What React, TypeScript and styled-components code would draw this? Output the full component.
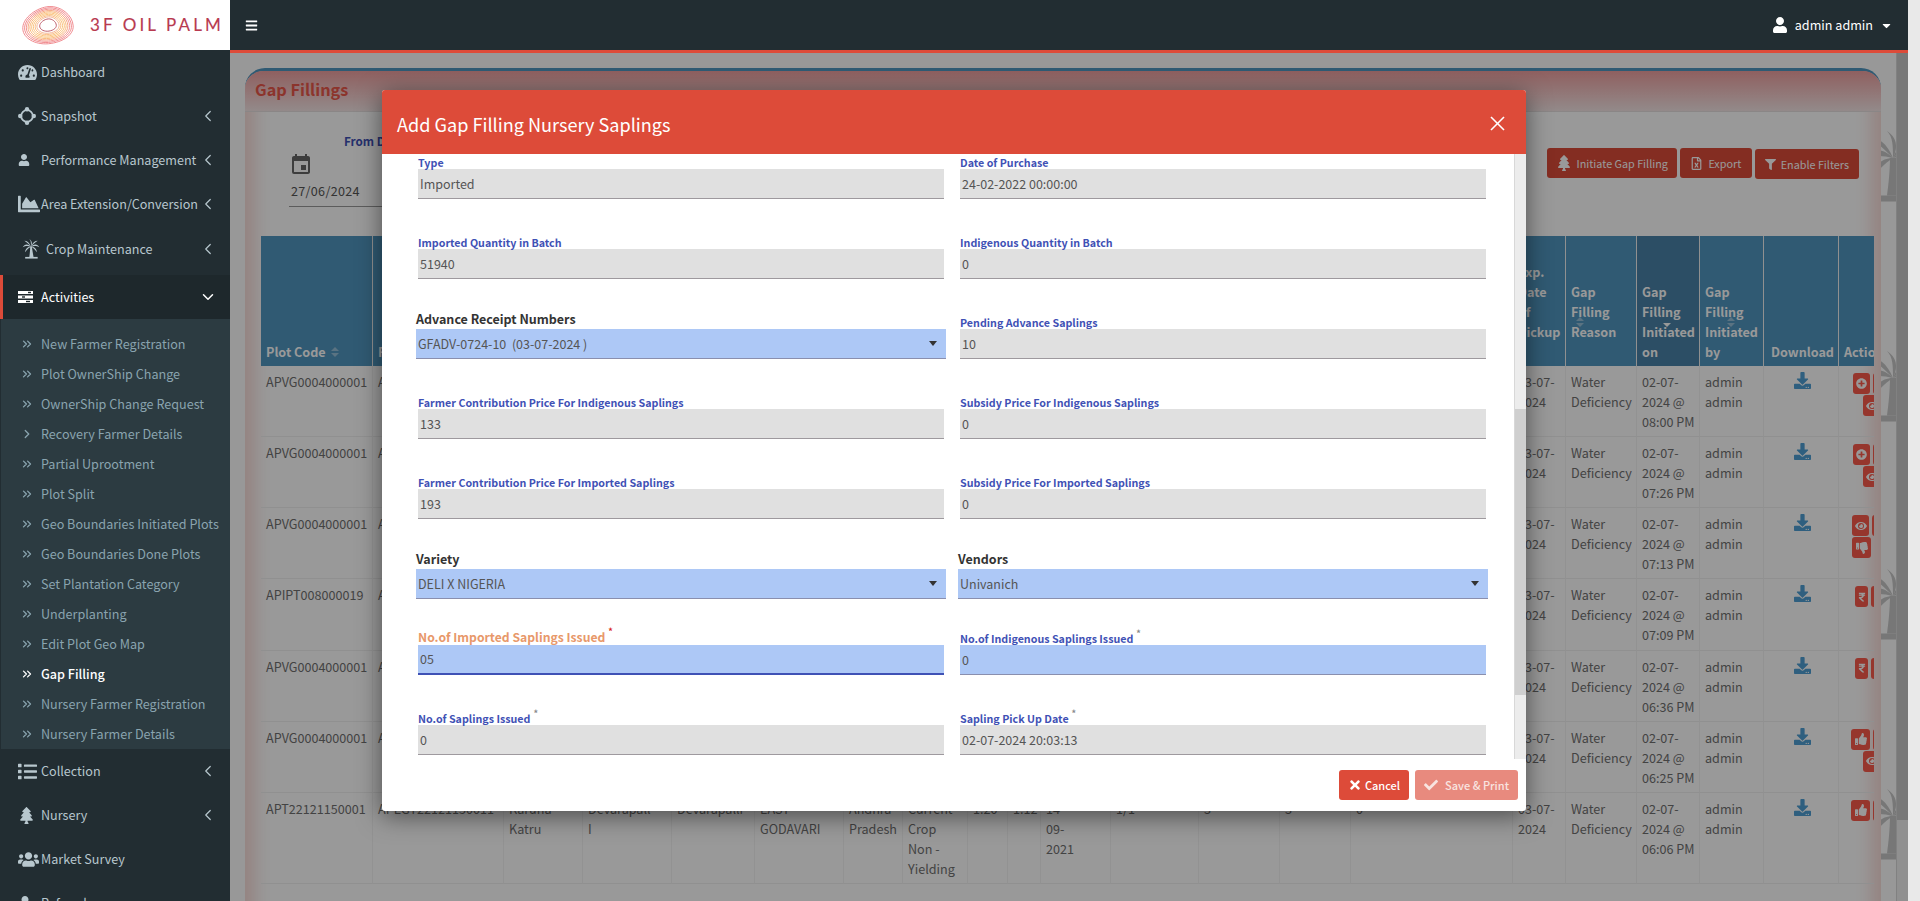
import React from "react";
import styled, { createGlobalStyle } from "styled-components";
import {
  FaBars,
  FaCaretDown,
  FaChartArea,
  FaCheck,
  FaDownload,
  FaEye,
  FaFilter,
  FaList,
  FaPlusCircle,
  FaRegFileExcel,
  FaRupeeSign,
  FaTachometerAlt,
  FaThumbsDown,
  FaThumbsUp,
  FaTimes,
  FaTree,
  FaUser,
  FaUsers,
} from "react-icons/fa";
import { ChevronDown, ChevronLeft, ChevronRight, ChevronsRight } from "lucide-react";
import { MdEvent } from "react-icons/md";

const font = `"Noto Sans CJK SC", "Noto Sans", sans-serif`;

const GlobalStyle = createGlobalStyle`
  html, body {
    margin: 0;
    height: 901px;
    overflow: hidden;
    background: #e9e9e9;
    font-family: ${font};
  }
  * { box-sizing: border-box; }
`;

const SnapshotIcon = () => (
  <svg width="18" height="18" viewBox="0 0 18 18" fill="currentColor">
    <circle cx="9" cy="9" r="5.8" fill="none" stroke="currentColor" strokeWidth="1.8" />
    <circle cx="9" cy="2.2" r="2.2" />
    <circle cx="9" cy="15.8" r="2.2" />
    <circle cx="2.2" cy="9" r="2.2" />
    <circle cx="15.8" cy="9" r="2.2" />
  </svg>
);

const TasksIcon = () => (
  <svg width="15" height="12" viewBox="0 0 15 12">
    <rect x="0" y="0" width="15" height="3" fill="#fff" />
    <rect x="0" y="4.5" width="15" height="3" fill="#fff" />
    <rect x="0" y="9" width="15" height="3" fill="#fff" />
    <rect x="10" y="0.8" width="3" height="1.4" fill="#1e282c" />
    <rect x="4" y="5.3" width="3" height="1.4" fill="#1e282c" />
    <rect x="8" y="9.8" width="4" height="1.4" fill="#1e282c" />
  </svg>
);

const PalmIcon = ({ size }: { size: number }) => (
  <svg width={size} height={size} viewBox="0 0 24 24" fill="currentColor">
    <path d="M12 9 C8 5 4 6 2 10 C5 8 8 8 12 9Z" />
    <path d="M12 9 C16 5 20 6 22 10 C19 8 16 8 12 9Z" />
    <path d="M12 9 C10 4 7 2 4 2 C7 4 9 6 12 9Z" />
    <path d="M12 9 C14 4 17 2 20 2 C17 4 15 6 12 9Z" />
    <path d="M12 9 C12 5 12 2 10 0 C13 2 14 5 12 9Z" />
    <path d="M12 9 C8 9 5 12 5 16 C7 13 9 11 12 9Z" />
    <path d="M12 9 C16 9 19 12 19 16 C17 13 15 11 12 9Z" />
    <path d="M11 9 L13 9 C13.5 13 14.5 18 15 21.5 L10 21.5 C10.5 18 11 13 11 9Z" />
    <rect x="5" y="21.5" width="15" height="2" />
  </svg>
);

const blob = "M52 6 C72 4 94 26 95 52 C96 76 72 94 46 95 C22 95 4 78 5 56 C6 32 30 8 52 6Z";
const rings: [number, string][] = [
  [1, "#ee7f85"],
  [0.93, "#ee8085"],
  [0.86, "#f08a86"],
  [0.79, "#f5a07a"],
  [0.72, "#f8b26e"],
  [0.65, "#f9bc70"],
  [0.58, "#f9bc70"],
  [0.51, "#f8b878"],
  [0.44, "#f4b08c"],
  [0.33, "#b8505f"],
];

const LogoMark = () => (
  <svg width="56" height="42" viewBox="0 0 100 100" preserveAspectRatio="none">
    {rings.map(([s, c]) => (
      <path
        key={s}
        d={blob}
        fill="none"
        stroke={c}
        strokeWidth="0.9"
        vectorEffect="non-scaling-stroke"
        transform={`translate(50 50) scale(${s}) translate(-50 -50)`}
      />
    ))}
  </svg>
);

const mainTop = [
  { label: "Dashboard", icon: <FaTachometerAlt size={19} /> },
  { label: "Snapshot", icon: <SnapshotIcon />, more: true },
  { label: "Performance Management", icon: <FaUser size={12} />, more: true },
  { label: "Area Extension/Conversion", icon: <FaChartArea size={22} />, more: true },
];

const subItems = [
  "New Farmer Registration",
  "Plot OwnerShip Change",
  "OwnerShip Change Request",
  "Recovery Farmer Details",
  "Partial Uprootment",
  "Plot Split",
  "Geo Boundaries Initiated Plots",
  "Geo Boundaries Done Plots",
  "Set Plantation Category",
  "Underplanting",
  "Edit Plot Geo Map",
  "Gap Filling",
  "Nursery Farmer Registration",
  "Nursery Farmer Details",
];

const mainBottom = [
  { label: "Collection", icon: <FaList size={19} />, more: true },
  { label: "Nursery", icon: <FaTree size={17} />, more: true },
  { label: "Market Survey", icon: <FaUsers size={21} /> },
  { label: "Referrals", icon: <FaUser size={14} /> },
];

const colWidths = [112, 131, 79, 89, 83, 89, 59, 65, 40, 33, 70, 88, 81, 71, 162, 53, 71, 63, 64, 75, 100];

type ActionKey = "plus" | "eye" | "down" | "up" | "rupee";

const rows: {
  plot: string;
  time: string;
  top: ActionKey;
  topIndent: number;
  second?: ActionKey;
  secondIndent?: number;
}[] = [
  { plot: "APVG0004000001", time: "08:00\u00a0PM", top: "plus", topIndent: 14, second: "eye", secondIndent: 24 },
  { plot: "APVG0004000001", time: "07:26\u00a0PM", top: "plus", topIndent: 14, second: "eye", secondIndent: 24 },
  { plot: "APVG0004000001", time: "07:13\u00a0PM", top: "eye", topIndent: 13, second: "down", secondIndent: 13 },
  { plot: "APIPT008000019", time: "07:09\u00a0PM", top: "rupee", topIndent: 16 },
  { plot: "APVG0004000001", time: "06:36\u00a0PM", top: "rupee", topIndent: 16 },
  { plot: "APVG0004000001", time: "06:25\u00a0PM", top: "up", topIndent: 12, second: "eye", secondIndent: 24 },
  { plot: "APT22121150001", time: "06:06\u00a0PM", top: "up", topIndent: 12 },
];

const actionIcon = (k: ActionKey) => {
  if (k === "plus") return <FaPlusCircle size={11} />;
  if (k === "eye") return <FaEye size={12} />;
  if (k === "down") return <FaThumbsDown size={12} />;
  if (k === "up") return <FaThumbsUp size={12} />;
  return <FaRupeeSign size={10} />;
};

const actionWidth = (k: ActionKey) => (k === "rupee" ? 13 : k === "plus" || k === "eye" ? 17 : 19);

const lastRowMiddle: React.ReactNode[] = [
  "Karuna Katru",
  <>
    Devarapall
    <br />I
  </>,
  "Devarapalli",
  "EAST GODAVARI",
  "Andhra Pradesh",
  <>
    Current
    <br />
    Crop
    <br />
    Non -
    <br />
    Yielding
  </>,
  "1.20",
  "1.12",
  <>
    14-
    <br />
    09-
    <br />
    2021
  </>,
  "1/1",
  "3",
  "3",
  "0",
];

const palmTops = [78, 298, 516, 736, 856];

const ActionButtons = ({ row }: { row: (typeof rows)[number] }) => (
  <>
    <ActionRow $indent={row.topIndent}>
      <ActionBtn $w={actionWidth(row.top)}>{actionIcon(row.top)}</ActionBtn>
      <ActionBtn $w={17} />
    </ActionRow>
    {row.second && (
      <ActionRow $indent={row.secondIndent || 0}>
        <ActionBtn $w={actionWidth(row.second)}>{actionIcon(row.second)}</ActionBtn>
        <ActionBtn $w={17} />
      </ActionRow>
    )}
  </>
);

const App = () => {
  return (
    <>
      <GlobalStyle />
      <Page>
        <Sidebar>
          <Logo>
            <LogoMark />
            <LogoText>3F OIL PALM</LogoText>
          </Logo>
          {mainTop.map((m) => (
            <NavItem key={m.label}>
              <NavIcon>{m.icon}</NavIcon>
              <span>{m.label}</span>
              {m.more && <Arrow><ChevronLeft size={18} strokeWidth={1.6} /></Arrow>}
            </NavItem>
          ))}
          <NavItem $tall>
            <NavIcon $crop><PalmIcon size={20} /></NavIcon>
            <span>Crop Maintenance</span>
            <Arrow><ChevronLeft size={18} strokeWidth={1.6} /></Arrow>
          </NavItem>
          <NavItem $active>
            <NavIcon><TasksIcon /></NavIcon>
            <span>Activities</span>
            <Arrow><ChevronDown size={18} strokeWidth={2} /></Arrow>
          </NavItem>
          <SubMenu>
            {subItems.map((s) => (
              <SubItem key={s} $current={s === "Gap Filling"}>
                <SubIcon>
                  {s === "Recovery Farmer Details" ? (
                    <ChevronRight size={14} strokeWidth={2.2} />
                  ) : (
                    <ChevronsRight size={14} strokeWidth={2.2} />
                  )}
                </SubIcon>
                {s}
              </SubItem>
            ))}
          </SubMenu>
          {mainBottom.map((m) => (
            <NavItem key={m.label}>
              <NavIcon>{m.icon}</NavIcon>
              <span>{m.label}</span>
              {m.more && <Arrow><ChevronLeft size={18} strokeWidth={1.6} /></Arrow>}
            </NavItem>
          ))}
        </Sidebar>

        <Main>
          <Topbar>
            <FaBars size={13} color="#fff" />
            <UserMenu>
              <FaUser size={16} />
              <span>admin admin</span>
              <FaCaretDown size={13} />
            </UserMenu>
          </Topbar>

          <Content>
            {palmTops.map((t) => (
              <Palm key={t} style={{ top: t }}>
                <PalmIcon size={72} />
              </Palm>
            ))}
            <Box>
              <BoxHeader>Gap Fillings</BoxHeader>
              <FilterRow>
                <DateField>
                  <FromLabel>From Date</FromLabel>
                  <MdEvent size={24} color="#666" />
                  <DateValue>27/06/2024</DateValue>
                </DateField>
                <Toolbar>
                  <ToolButton $pad={9}>
                    <FaTree size={16} /> Initiate Gap Filling
                  </ToolButton>
                  <ToolButton $pad={10.5}>
                    <FaRegFileExcel size={13} /> Export
                  </ToolButton>
                  <ToolButton $pad={10} $low>
                    <FaFilter size={11} /> Enable Filters
                  </ToolButton>
                </Toolbar>
              </FilterRow>
              <TableWrap>
                <Table>
                  <colgroup>
                    {colWidths.map((w, i) => (
                      <col key={i} width={w} />
                    ))}
                  </colgroup>
                  <thead>
                    <tr>
                      <Th>
                        Plot Code <SortMark $left={70} $bottom={9} />
                      </Th>
                      <Th>Farmer Code</Th>
                      {Array.from({ length: 13 }).map((_, i) => (
                        <Th key={i} />
                      ))}
                      <Th $raised>
                        Exp.
                        <br />
                        Date
                        <br />
                        of
                        <br />
                        Pickup
                      </Th>
                      <Th $raised>
                        Gap Filling Reason <SortMark $left={10} $bottom={39} />
                      </Th>
                      <Th $sorted>
                        Gap Filling Initiated on <SortMark $left={26} $bottom={39} $down />
                      </Th>
                      <Th>
                        Gap Filling Initiated by <SortMark $left={27} $bottom={39} />
                      </Th>
                      <Th $center>Download</Th>
                      <Th>Action</Th>
                    </tr>
                  </thead>
                  <tbody>
                    {rows.map((r, i) => (
                      <tr key={i}>
                        <Td>{r.plot}</Td>
                        <Td>{i === 6 ? "APEGT22121150011" : r.plot}</Td>
                        {lastRowMiddle.map((c, j) => (
                          <Td key={j}>{i === 6 ? c : ""}</Td>
                        ))}
                        <Td>03-07-2024</Td>
                        <Td>Water Deficiency</Td>
                        <Td>02-07-2024 @ {r.time}</Td>
                        <Td>admin admin</Td>
                        <Td $center>
                          <FaDownload size={17} color="#4f9fd4" />
                        </Td>
                        <Td $flush>
                          <ActionButtons row={r} />
                        </Td>
                      </tr>
                    ))}
                  </tbody>
                </Table>
              </TableWrap>
            </Box>
            <InnerScroll />
            <Backdrop />
          </Content>
        </Main>

        <PageScroll />

        <Modal>
          <ModalHeader>
            <span>Add Gap Filling Nursery Saplings</span>
            <svg width="15" height="15" viewBox="0 0 15 15" stroke="#fff" strokeWidth="1.6">
              <line x1="1" y1="1" x2="14" y2="14" />
              <line x1="14" y1="1" x2="1" y2="14" />
            </svg>
          </ModalHeader>
          <ModalBody>
            <Form>
              <FormRow>
                <Field>
                  <FieldLabel>Type</FieldLabel>
                  <Input>Imported</Input>
                </Field>
                <Field>
                  <FieldLabel>Date of Purchase</FieldLabel>
                  <Input>24-02-2022 00:00:00</Input>
                </Field>
              </FormRow>
              <FormRow>
                <Field>
                  <FieldLabel>Imported Quantity in Batch</FieldLabel>
                  <Input>51940</Input>
                </Field>
                <Field>
                  <FieldLabel>Indigenous Quantity in Batch</FieldLabel>
                  <Input>0</Input>
                </Field>
              </FormRow>
              <FormRow>
                <Field>
                  <SelectLabel>Advance Receipt Numbers</SelectLabel>
                  <Select>
                    GFADV-0724-10&nbsp; (03-07-2024 )
                    <Caret />
                  </Select>
                </Field>
                <Field>
                  <FieldLabel>Pending Advance Saplings</FieldLabel>
                  <Input>10</Input>
                </Field>
              </FormRow>
              <FormRow>
                <Field>
                  <FieldLabel>Farmer Contribution Price For Indigenous Saplings</FieldLabel>
                  <Input>133</Input>
                </Field>
                <Field>
                  <FieldLabel>Subsidy Price For Indigenous Saplings</FieldLabel>
                  <Input>0</Input>
                </Field>
              </FormRow>
              <FormRow>
                <Field>
                  <FieldLabel>Farmer Contribution Price For Imported Saplings</FieldLabel>
                  <Input>193</Input>
                </Field>
                <Field>
                  <FieldLabel>Subsidy Price For Imported Saplings</FieldLabel>
                  <Input>0</Input>
                </Field>
              </FormRow>
              <FormRow $tight>
                <Field>
                  <SelectLabel>Variety</SelectLabel>
                  <Select>
                    DELI X NIGERIA
                    <Caret />
                  </Select>
                </Field>
                <Field>
                  <SelectLabel>Vendors</SelectLabel>
                  <Select>
                    Univanich
                    <Caret />
                  </Select>
                </Field>
              </FormRow>
              <FormRow>
                <Field>
                  <FieldLabel $focused>
                    No.of Imported Saplings Issued<Req $focused>*</Req>
                  </FieldLabel>
                  <Input $filled $focused>05</Input>
                </Field>
                <Field>
                  <FieldLabel>
                    No.of Indigenous Saplings Issued<Req>*</Req>
                  </FieldLabel>
                  <Input $filled>0</Input>
                </Field>
              </FormRow>
              <FormRow>
                <Field>
                  <FieldLabel>
                    No.of Saplings Issued<Req>*</Req>
                  </FieldLabel>
                  <Input>0</Input>
                </Field>
                <Field>
                  <FieldLabel>
                    Sapling Pick Up Date<Req>*</Req>
                  </FieldLabel>
                  <Input>02-07-2024 20:03:13</Input>
                </Field>
              </FormRow>
            </Form>
            <ScrollTrack>
              <ScrollThumb />
            </ScrollTrack>
          </ModalBody>
          <ModalFooter>
            <FootButton>
              <FaTimes size={14} /> Cancel
            </FootButton>
            <FootButton $disabled>
              <FaCheck size={14} /> Save &amp; Print
            </FootButton>
          </ModalFooter>
        </Modal>
      </Page>
    </>
  );
};

const Page = styled.div`
  display: flex;
  width: 1920px;
  height: 901px;
  overflow: hidden;
  position: relative;
`;

const Sidebar = styled.div`
  width: 230px;
  flex-shrink: 0;
  height: 901px;
  overflow: hidden;
  background: #222d32;
`;

const Logo = styled.div`
  height: 50px;
  background: #fff;
  display: flex;
  align-items: center;
  padding-left: 20px;
  gap: 14px;
`;

const LogoText = styled.div`
  font-family: "Lato", sans-serif;
  font-size: 17px;
  font-weight: 400;
  letter-spacing: 3.1px;
  line-height: 20px;
  color: #b83a50;
  -webkit-text-stroke: 0.15px #b83a50;
  white-space: nowrap;
`;

const NavItem = styled.div<{ $active?: boolean; $tall?: boolean }>`
  height: ${(p) => (p.$tall ? 49 : 44)}px;
  display: flex;
  align-items: center;
  padding: ${(p) => (p.$tall ? "0 13px 4px 0" : "0 13px 0 0")};
  font-size: 12.6px;
  line-height: 20px;
  white-space: nowrap;
  color: ${(p) => (p.$active ? "#fff" : "#b8c7ce")};
  background: ${(p) => (p.$active ? "#1e282c" : "transparent")};
  border-left: 3px solid ${(p) => (p.$active ? "#dd4b39" : "transparent")};
`;

const NavIcon = styled.div<{ $crop?: boolean }>`
  width: ${(p) => (p.$crop ? 43 : 38)}px;
  padding-left: ${(p) => (p.$crop ? 18 : 15)}px;
  display: flex;
  align-items: center;
  flex-shrink: 0;
`;

const Arrow = styled.span`
  margin-left: auto;
  display: flex;
`;

const SubMenu = styled.div`
  background: #2c3b41;
  padding-top: 10px;
  border-left: 1px solid #222d32;
`;

const SubItem = styled.div<{ $current?: boolean }>`
  height: 30px;
  display: flex;
  align-items: center;
  font-size: 12.6px;
  line-height: 20px;
  white-space: nowrap;
  color: ${(p) => (p.$current ? "#fff" : "#8aa4af")};
  font-weight: ${(p) => (p.$current ? 500 : 400)};
`;

const SubIcon = styled.span`
  width: 40px;
  padding-left: 19px;
  display: flex;
  flex-shrink: 0;
`;

const Main = styled.div`
  width: 1678px;
  flex-shrink: 0;
  display: flex;
  flex-direction: column;
`;

const Topbar = styled.div`
  height: 53px;
  flex-shrink: 0;
  background: #222d32;
  border-bottom: 3px solid #dd4b39;
  display: flex;
  align-items: center;
  justify-content: space-between;
  padding: 0 15px 0 15px;
`;

const UserMenu = styled.div`
  display: flex;
  align-items: center;
  gap: 7px;
  color: #fff;
  font-size: 12.6px;
  line-height: 20px;
`;

const Content = styled.div`
  flex: 1;
  position: relative;
  overflow: hidden;
  background: #fdfdfd;
  padding: 15px 27px 0 15px;
`;

const Palm = styled.div`
  position: absolute;
  left: 1627px;
  color: #c6c6c6;
  display: flex;
`;

const InnerScroll = styled.div`
  position: absolute;
  top: 0;
  right: 0;
  width: 12px;
  height: 100%;
  background: linear-gradient(#c8c8c8 767px, #f1f1f1 767px);
  border-left: 1px solid #d8d8d8;
`;

const Backdrop = styled.div`
  position: absolute;
  inset: 0;
  background: rgba(0, 0, 0, 0.4);
`;

const Box = styled.div`
  position: relative;
  height: 900px;
  background: #fff;
  border-top: 3px solid #4f96c0;
  border-radius: 20px 20px 0 0;
  box-shadow: inset 16px 0 16px -6px rgba(221, 75, 57, 0.2), inset -16px 0 16px -6px rgba(221, 75, 57, 0.2);
`;

const BoxHeader = styled.div`
  height: 41px;
  padding: 0 0 4px 10px;
  display: flex;
  align-items: center;
  font-size: 16.3px;
  line-height: 24px;
  font-weight: 700;
  color: #e9584a;
  border-radius: 18px 18px 0 0;
  border-bottom: 1px solid #e6e0e0;
  background: linear-gradient(#efa0a0, #f5e6e6);
`;

const FilterRow = styled.div`
  height: 124px;
  display: flex;
  justify-content: space-between;
  padding: 20px 22px 0 44px;
`;

const DateField = styled.div`
  width: 240px;
  font-size: 12.6px;
  line-height: 20px;
  color: #6a6a6a;
`;

const FromLabel = styled.div`
  margin-left: 55px;
  height: 21px;
  font-size: 11.7px;
  line-height: 18px;
  font-weight: 700;
  color: #3f51b5;
`;

const DateValue = styled.div`
  margin-top: -1px;
  padding: 0 2px 5px;
  font-size: 12.6px;
  color: #555;
  letter-spacing: 0.3px;
  border-bottom: 1px solid #999;
`;

const Toolbar = styled.div`
  display: flex;
  gap: 3px;
  padding-top: 16px;
`;

const ToolButton = styled.div<{ $low?: boolean; $pad: number }>`
  height: 30px;
  margin-top: ${(p) => (p.$low ? 1 : 0)}px;
  padding: 0 ${(p) => p.$pad}px;
  display: flex;
  align-items: center;
  gap: 5px;
  background: #dd4b39;
  border-radius: 3px;
  color: #fff;
  font-size: 10.8px;
  line-height: 16px;
  white-space: nowrap;
`;

const TableWrap = styled.div`
  margin: 0 7px 0 16px;
  overflow: hidden;
`;

const Table = styled.table`
  table-layout: fixed;
  border-collapse: separate;
  border-spacing: 0;
  width: 1678px;
  font-size: 12.6px;
  line-height: 20px;
`;

const Th = styled.th<{ $sorted?: boolean; $center?: boolean; $raised?: boolean }>`
  position: relative;
  height: 130px;
  vertical-align: bottom;
  padding: 0 2px ${(p) => (p.$raised ? 24 : 4)}px 5px;
  text-align: ${(p) => (p.$center ? "center" : "left")};
  font-weight: 700;
  font-size: 12.6px;
  color: #fff;
  background: ${(p) => (p.$sorted ? "#4a83a8" : "#5096c0")};
  border-right: 1px solid #f0f0f0;
  overflow: hidden;
  &:last-child { border-right: none; }
`;

const SortMark = styled.span<{ $left: number; $bottom: number; $down?: boolean }>`
  position: absolute;
  left: ${(p) => p.$left}px;
  bottom: ${(p) => p.$bottom}px;
  width: 8px;
  height: 10px;
  &::before, &::after {
    position: absolute;
    left: 0;
    border-left: 4px solid transparent;
    border-right: 4px solid transparent;
  }
  &::before {
    content: ${(p) => (p.$down ? "none" : "''")};
    top: 0;
    border-bottom: 4px solid rgba(255, 255, 255, 0.4);
  }
  &::after {
    content: "";
    bottom: 0;
    border-top: 4px solid ${(p) => (p.$down ? "#fff" : "rgba(255, 255, 255, 0.4)")};
  }
`;

const Td = styled.td<{ $center?: boolean; $flush?: boolean }>`
  vertical-align: top;
  padding: ${(p) => (p.$flush ? "7px 0 0" : "6px 2px 4.17px 5px")};
  color: #707070;
  text-align: ${(p) => (p.$center ? "center" : "left")};
  border-right: 1px solid #f4f4f4;
  border-bottom: 1px solid #f0f0f0;
`;

const ActionRow = styled.div<{ $indent: number }>`
  display: flex;
  gap: 3px;
  height: 22px;
  padding-left: ${(p) => p.$indent}px;
`;

const ActionBtn = styled.span<{ $w: number }>`
  width: ${(p) => p.$w}px;
  height: 21px;
  flex-shrink: 0;
  display: flex;
  align-items: center;
  justify-content: center;
  background: #fa5a4b;
  border-radius: 3px;
  color: #fff;
`;

const PageScroll = styled.div`
  width: 12px;
  flex-shrink: 0;
  background: #e9e9e9;
`;

const Modal = styled.div`
  position: absolute;
  left: 382px;
  top: 90px;
  width: 1144px;
  height: 721px;
  display: flex;
  flex-direction: column;
  background: #fff;
  border-radius: 3px;
  box-shadow: 0 5px 24px rgba(0, 0, 0, 0.5);
`;

const ModalHeader = styled.div`
  height: 64px;
  flex-shrink: 0;
  background: #dd4b39;
  border-radius: 3px 3px 0 0;
  display: flex;
  align-items: center;
  justify-content: space-between;
  padding: 3px 21px 0 15px;
  color: #fff;
  font-size: 18.1px;
  line-height: 28px;
`;

const ModalBody = styled.div`
  height: 605px;
  flex-shrink: 0;
  display: flex;
  overflow: hidden;
`;

const Form = styled.div`
  width: 1132px;
  margin-top: -5px;
  padding-left: 34px;
`;

const FormRow = styled.div<{ $tight?: boolean }>`
  display: grid;
  grid-template-columns: 530px 530px;
  column-gap: 12px;
  height: ${(p) => (p.$tight ? 76 : 80)}px;
`;

const Field = styled.div`
  display: flex;
  flex-direction: column;
`;

const FieldLabel = styled.div<{ $focused?: boolean }>`
  height: 20px;
  margin-left: 2px;
  display: flex;
  align-items: flex-end;
  font-size: ${(p) => (p.$focused ? 12.2 : 10.7)}px;
  line-height: 12px;
  font-weight: 700;
  color: ${(p) => (p.$focused ? "#e8986a" : "#3f51b5")};
  white-space: nowrap;
  position: relative;
  top: ${(p) => (p.$focused ? -2 : 0)}px;
`;

const SelectLabel = styled.div`
  height: 20px;
  font-size: 12.5px;
  line-height: 20px;
  font-weight: 700;
  color: #333;
  white-space: nowrap;
`;

const Req = styled.span<{ $focused?: boolean }>`
  position: relative;
  top: -5px;
  margin-left: 3px;
  font-size: 9px;
  line-height: 12px;
  color: ${(p) => (p.$focused ? "#d9251c" : "#888")};
`;

const Input = styled.div<{ $filled?: boolean; $focused?: boolean }>`
  height: 30px;
  margin: 0 2px;
  padding: 0 2px;
  display: flex;
  align-items: center;
  font-size: 12.5px;
  line-height: 20px;
  color: #555;
  background: ${(p) => (p.$filled ? "#adc8f6" : "#e0e0e0")};
  border-bottom: ${(p) =>
    p.$focused ? "2px solid #3f51b5" : p.$filled ? "1px solid #8a8fae" : "1px solid #9e999e"};
`;

const Select = styled.div`
  position: relative;
  height: 30px;
  padding: 0 2px;
  display: flex;
  align-items: center;
  font-size: 12.5px;
  line-height: 20px;
  color: #555;
  background: #adc8f6;
  border-bottom: 1px solid #8a8fae;
`;

const Caret = styled.span`
  position: absolute;
  right: 9px;
  top: 12px;
  border-left: 4px solid transparent;
  border-right: 4px solid transparent;
  border-top: 5px solid #333;
`;

const ScrollTrack = styled.div`
  width: 12px;
  flex-shrink: 0;
  background: #ececec;
  border-left: 1px solid #d8d8d8;
`;

const ScrollThumb = styled.div`
  margin-top: 255px;
  height: 286px;
  background: #cfcfcf;
`;

const ModalFooter = styled.div`
  flex: 1;
  display: flex;
  justify-content: flex-end;
  gap: 6px;
  padding: 11px 8px 0 0;
`;

const FootButton = styled.div<{ $disabled?: boolean }>`
  height: 30px;
  padding: 0 9px;
  display: flex;
  align-items: center;
  gap: ${(p) => (p.$disabled ? 7 : 3)}px;
  background: ${(p) => (p.$disabled ? "#e88a7e" : "#dd4b39")};
  border-radius: 3px;
  color: ${(p) => (p.$disabled ? "#f8e4e0" : "#fff")};
  font-size: 11px;
  line-height: 16px;
  font-weight: 500;
  white-space: nowrap;
`;

export default App;
